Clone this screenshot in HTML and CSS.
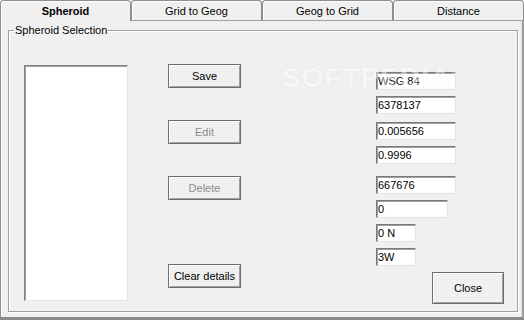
FILE: index.html
```html
<!DOCTYPE html>
<html lang="en">
<head>
    <meta charset="UTF-8">
    <title>Spheroid</title>
    <link rel="stylesheet" href="styles.css">
</head>
<body>
    <div class="window">
        <div class="tabs">
            <div class="tab active">Spheroid</div>
            <div class="tab">Grid to Geog</div>
            <div class="tab">Geog to Grid</div>
            <div class="tab">Distance</div>
        </div>

        <div class="panel">
            <fieldset class="group">
                <legend>Spheroid Selection</legend>
                <div class="content">
                    <div class="listbox"></div>

                    <div class="buttons">
                        <button class="btn save">Save</button>
                        <button class="btn edit" disabled>Edit</button>
                        <button class="btn delete" disabled>Delete</button>
                        <button class="btn clear">Clear details</button>
                    </div>

                    <div class="fields">
                        <input class="field" type="text" value="WSG 84">
                        <input class="field" type="text" value="6378137">
                        <input class="field gap-wide" type="text" value="0.005656">
                        <input class="field" type="text" value="0.9996">
                        <input class="field gap-big" type="text" value="667676">
                        <input class="field mid" type="text" value="0">
                        <input class="field short" type="text" value="0 N">
                        <input class="field short" type="text" value="3W">
                        <button class="btn close">Close</button>
                    </div>
                </div>
            </fieldset>
            <div class="watermark">SOFTPEDIA<sup>®</sup></div>
        </div>
    </div>
</body>
</html>
```

FILE: styles.css
```css
body {
    margin: 0;
    background-color: #f0f0f0;
    font-family: "Liberation Sans", Arial, sans-serif;
    font-size: 11px;
    color: #000;
}
.window {
    width: 524px;
    height: 320px;
    overflow: hidden;
}
.tabs {
    display: flex;
    height: 21px;
}
.tab {
    width: 131px;
    box-sizing: border-box;
    border: 1px solid #8e8e8e;
    border-bottom-color: #a0a0a0;
    border-radius: 4px 4px 0 0;
    box-shadow: inset 1px 1px 0 #fff;
    text-align: center;
    line-height: 20px;
}
.tab.active {
    font-weight: bold;
    border-bottom: none;
    border-right-color: #8e8e8e;
}
.panel {
    position: relative;
    height: 299px;
    box-sizing: border-box;
    border-left: 1px solid #8e8e8e;
    border-right: 2px solid #a0a0a0;
    border-bottom: 3px solid #8a8a8a;
    box-shadow: inset 1px 0 0 #fff, inset -1px 0 0 #e0e0e0;
    padding: 3px 0 0 7px;
}
.group {
    margin: 0;
    padding: 0;
    width: 510px;
    height: 288px;
    box-sizing: border-box;
    border: 1px solid #a0a0a0;
    box-shadow: 1px 1px 0 #fff, inset 1px 1px 0 #fff;
}
.group legend {
    margin-left: 5px;
    padding: 0 1px;
    line-height: 13px;
}
.content {
    display: flex;
    align-items: flex-start;
    padding-left: 15px;
}
.listbox {
    width: 104px;
    height: 236px;
    margin-top: 28px;
    box-sizing: border-box;
    background: #fff;
    border: 1px solid;
    border-color: #828282 #e3e3e3 #e3e3e3 #828282;
    box-shadow: inset 1px 1px 0 #a0a0a0;
}
.buttons {
    display: flex;
    flex-direction: column;
    margin-left: 40px;
    margin-top: 27px;
}
.btn {
    width: 73px;
    height: 24px;
    padding: 0;
    background: #f0f0f0;
    border: 1px solid #6e6e6e;
    box-shadow: inset 1px 1px 0 #fff, inset -1px -1px 0 #a0a0a0;
    font-family: inherit;
    font-size: 11px;
    color: #000;
}
.btn:disabled {
    color: #8d8d8d;
}
.edit, .delete {
    margin-top: 32px;
}
.clear {
    margin-top: 64px;
}
.fields {
    display: flex;
    flex-direction: column;
    align-items: flex-start;
    margin-left: 135px;
    margin-top: 35px;
}
.field {
    width: 80px;
    height: 18px;
    margin: 0 0 6px 0;
    padding: 0 2px 0 1px;
    box-sizing: border-box;
    background: #fff;
    border: 1px solid;
    border-color: #7a7a7a #e3e3e3 #e3e3e3 #7a7a7a;
    box-shadow: inset 1px 1px 0 #a0a0a0;
    font-family: inherit;
    font-size: 11px;
    color: #000;
}
.gap-wide {
    margin-top: 2px;
}
.gap-big {
    margin-top: 6px;
}
.mid {
    width: 72px;
}
.short {
    width: 40px;
}
.btn.close {
    width: 72px;
    height: 32px;
    margin-left: 56px;
}
.watermark {
    position: absolute;
    left: 281px;
    top: 41px;
    font-size: 28px;
    font-weight: bold;
    letter-spacing: 1px;
    color: #fff;
    text-shadow: 0 0 2px #cfcfcf;
    opacity: 0.45;
    pointer-events: none;
}
.watermark sup {
    font-size: 9px;
    font-weight: normal;
}
```
